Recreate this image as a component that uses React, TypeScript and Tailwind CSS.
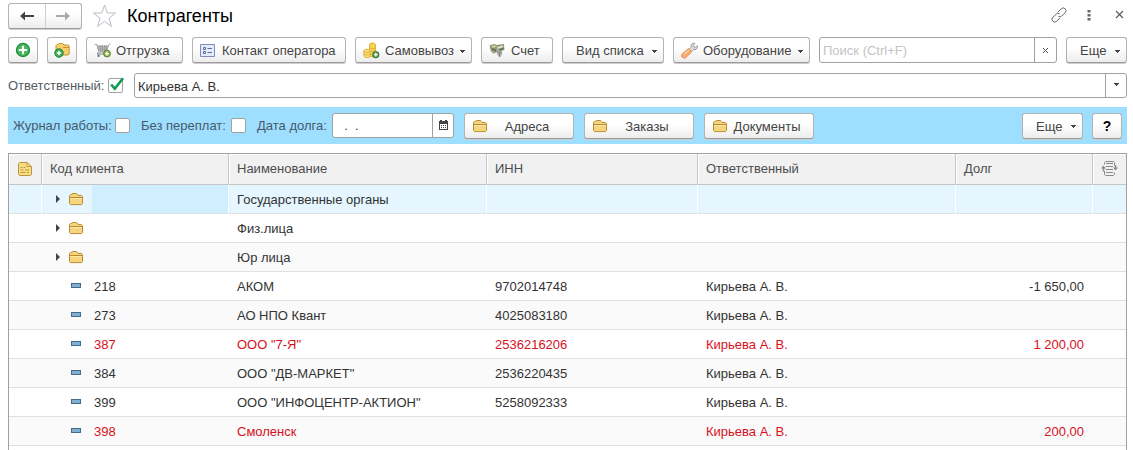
import { useState, type ReactNode } from "react";

type Row = {
  kind: "group" | "item";
  code?: string;
  name: string;
  inn?: string;
  manager?: string;
  debt?: string;
  overdue?: boolean;
};

const rows: Row[] = [
  { kind: "group", name: "Государственные органы" },
  { kind: "group", name: "Физ.лица" },
  { kind: "group", name: "Юр лица" },
  { kind: "item", code: "218", name: "АКОМ", inn: "9702014748", manager: "Кирьева А. В.", debt: "-1 650,00" },
  { kind: "item", code: "273", name: "АО НПО Квант", inn: "4025083180", manager: "Кирьева А. В." },
  { kind: "item", code: "387", name: 'ООО "7-Я"', inn: "2536216206", manager: "Кирьева А. В.", debt: "1 200,00", overdue: true },
  { kind: "item", code: "384", name: 'ООО "ДВ-МАРКЕТ"', inn: "2536220435", manager: "Кирьева А. В." },
  { kind: "item", code: "399", name: 'ООО "ИНФОЦЕНТР-АКТИОН"', inn: "5258092333", manager: "Кирьева А. В." },
  { kind: "item", code: "398", name: "Смоленск", manager: "Кирьева А. В.", debt: "200,00", overdue: true },
];

const buttonLook =
  "flex h-[26px] shrink-0 items-center rounded-[3px] border border-[#b3b3b3] border-b-[#9a9a9a] bg-linear-to-b from-white from-40% to-[#ededed] shadow-[0_1px_0_#cfcfcf] text-[#444444]";

function Caret({ className = "" }: { className?: string }) {
  return (
    <svg viewBox="0 0 5 3" className={`h-[3px] w-[5px] shrink-0 ${className}`} shapeRendering="crispEdges">
      <path d="M0 0h5v1H4v1H3v1H2V2H1V1H0z" fill="#444" />
    </svg>
  );
}

function FolderIcon() {
  return (
    <svg viewBox="0 0 16 14" className="h-[14px] w-4 shrink-0">
      <path d="M1.5 11.5v-8l1.2-1.2h1L5 1.5h3.5L10 3.4h3.3l1.2 1.2v7l-1 1h-11z" fill="#f6d67c" stroke="#b98a35" strokeLinejoin="round" />
      <path d="M2 5.5h12" stroke="#b98a35" />
      <path d="M2.2 6.5h11.6" stroke="#fde9a8" />
    </svg>
  );
}

function PlusBadge({ cx, cy, r }: { cx: number; cy: number; r: number }) {
  const a = r * 0.55;
  return (
    <g>
      <circle cx={cx} cy={cy} r={r} fill="#3bab50" stroke="#21803a" />
      <path d={`M${cx - a} ${cy}h${a * 2}M${cx} ${cy - a}v${a * 2}`} stroke="#fff" strokeWidth={1.5} />
    </g>
  );
}

function AddIcon() {
  return (
    <svg viewBox="0 0 16 16" className="size-4">
      <circle cx="8" cy="8" r="6.6" fill="#43b65a" stroke="#258b40" strokeWidth="1.2" />
      <path d="M3.8 8h8.4M8 3.8v8.4" stroke="#fff" strokeWidth="2.2" />
    </svg>
  );
}

function AddGroupIcon() {
  return (
    <svg viewBox="0 0 16 16" className="size-4">
      <path d="M2 12V3.5l1-1h1L5 1.5h3.5L10 3h4.2l1 1v8l-1 1H3z" fill="#f6cf6d" stroke="#c39138" />
      <path d="M9 5.5h6" stroke="#c39138" />
      <PlusBadge cx={5} cy={11} r={4.2} />
    </svg>
  );
}

function CartIcon() {
  return (
    <svg viewBox="0 0 18 16" className="h-4 w-[18px] shrink-0" fill="none">
      <path d="M2.2 3.5 14 4.3l-1.8 5.2H4.6z" fill="#d6d6d6" />
      <path d="M.7 2.5H3l2 7.5h7.4l2.3-7.4 1.8-.8M3 4.2h11M3.6 6h10M4 7.9h9M6 3l.8 7M8.3 3v7M10.6 3l-.5 7M12.8 3l-1.2 7" stroke="#8f8f8f" strokeWidth=".8" />
      <path d="M4.5 10 3.2 12h9" stroke="#808080" />
      <circle cx="4.6" cy="13.8" r="1.2" fill="#777" />
      <circle cx="13" cy="11.6" r="3.4" fill="#8bb343" stroke="#58822b" />
      <path d="M11 11.6h4M13 9.6v4" stroke="#fff" strokeWidth="1.4" />
    </svg>
  );
}

function CardIcon() {
  return (
    <svg viewBox="0 0 15 13" className="h-[13px] w-[15px] shrink-0" fill="none">
      <path d="M.5.5h14v12H.5z" fill="#e6ebfb" stroke="#7c8dbd" />
      <path d="M3.5 3.5h2v2h-2zM3.5 7.5h2v2h-2z" stroke="#5f6d9a" />
      <path d="M7.5 4.5h4.5M7.5 8.5h4.5" stroke="#5f6d9a" />
    </svg>
  );
}

function CoinsIcon() {
  return (
    <svg viewBox="0 0 17 17" className="size-[17px] shrink-0">
      <path d="M6.5 2.8c0-1 1.2-1.7 3-1.7s3 .7 3 1.7v10.4c0 1-1.2 1.7-3 1.7s-3-.7-3-1.7z" fill="#f8d34c" stroke="#d7a32a" strokeWidth=".8" />
      <path d="M6.6 5.6c.8 1.4 5 1.4 5.8 0M6.6 8.4c.8 1.4 5 1.4 5.8 0" stroke="#d7a32a" strokeWidth=".8" fill="none" />
      <path d="M.8 9c0-1 1.2-1.7 3.2-1.7S7.2 8 7.2 9v4.8c0 1-1.2 1.7-3.2 1.7s-3.2-.7-3.2-1.7z" fill="#fae07a" stroke="#d7a32a" strokeWidth=".8" />
      <path d="M1 9.4c1 1.4 5.2 1.4 6.1 0M1 12c1 1.4 5.2 1.4 6.1 0" stroke="#d7a32a" strokeWidth=".8" fill="none" />
      <circle cx="12.8" cy="12.7" r="3.2" fill="#5b9a50" stroke="#2f6f38" strokeWidth=".9" />
      <path d="M10.9 12.7h3.8M12.8 10.8v3.8" stroke="#fff" strokeWidth="1.3" />
    </svg>
  );
}

function BillIcon() {
  return (
    <svg viewBox="0 0 16 16" className="size-4 shrink-0">
      <path d="M.5 3.5 5 2l3 1 7-1 .4 6-5.4 1.5-4 1.5-4-1.5z" fill="#87946c" />
      <path d="M1.500 4.200 5 3.200l3.500 1L4.500 6z" fill="#c8cda9" />
      <path d="m8 5 5.500-1.800 1 1.800L9 7z" fill="#dfe2cc" />
      <path d="m3 7 4 1.500M9.500 8l5-1.500" stroke="#56614a" />
      <path d="M7.500 6h2l.5 3 3-.5-.5 5.500-2 1.500-2.500-3z" fill="#b0b0b0" />
      <path d="m8.500 9.500 2 1v4M12 9v3" stroke="#777" strokeWidth=".8" fill="none" />
      <path d="M2 8.500 6 10l-1 2-2-1z" fill="#b9b18e" />
    </svg>
  );
}

function WrenchIcon() {
  return (
    <svg viewBox="0 0 17 17" className="size-[17px] shrink-0">
      <path d="m8 7.500 2-2c-.5-2.300.8-4.200 3-4.500l.8.500-1.500 2 .7 1.500 1.500.3 1.600-1.600.5.800c0 2.200-2 3.700-4 3.100l-2 2z" fill="#dcdcdc" stroke="#858585" strokeWidth=".8" />
      <path d="m7.500 6.500 3.300 3.300-5.600 5.500c-1.200 1.100-2.900 1-3.900 0s-1-2.500.1-3.600z" fill="#f9a96b" stroke="#e08a4c" strokeWidth=".9" />
      <path d="m3 12.500 5-4.500" stroke="#fdd0a8" strokeWidth="1.200" />
    </svg>
  );
}

function DocumentIcon() {
  return (
    <svg viewBox="0 0 14 14" className="h-[14px] w-[14px]">
      <path d="M.5 1.500l1-1h7.500l4.500 4v8l-1 1h-11l-1-1z" fill="#f8dc84" stroke="#bd9440" />
      <path d="M9 .8v3.700h4.200M2.500 5.500h2M5.500 5.500h2M2.500 8h3M7 8h4M2.500 10.500h5M9 10.500h2" stroke="#bd9440" fill="none" strokeWidth=".9" />
    </svg>
  );
}

function ListSettingsIcon() {
  return (
    <svg viewBox="0 0 17 15" className="h-[15px] w-[17px]" fill="none" stroke="#8a8a8a">
      <path d="M3.500 3.500v-2l1-1h8l1 1v3M3.500 10v3.500l1 1h8l1-1v-2" />
      <path d="M5 2.500h7M5 5.500h7M5 8.500h7M5 11.500h7" />
      <path d="M2.500 6v4.500M14.500 4v4" strokeWidth="1.500" />
      <path d="M0 7.500 2.500 4.500 5 7.500zM12 6.500h5L14.500 9.500z" fill="#8a8a8a" stroke="none" />
    </svg>
  );
}

function ToolButton({ icon, label, menu, width }: { icon?: ReactNode; label: string; menu?: boolean; width: string }) {
  return (
    <button type="button" className={`${buttonLook} ${width} ${icon ? "pl-[7px]" : "pl-[13px]"}`}>
      {icon && <span className="flex w-[22px] shrink-0">{icon}</span>}
      <span className="pt-0.5 whitespace-nowrap">{label}</span>
      {menu && <Caret className="mt-0.5 mr-[6px] ml-auto" />}
    </button>
  );
}

function FolderButton({ label }: { label: string }) {
  return (
    <button type="button" className={`${buttonLook} w-[110px] px-[7px]`}>
      <FolderIcon />
      <span className="flex-1 pt-0.5 text-center">{label}</span>
    </button>
  );
}

function Check({ id, checked = false }: { id: string; checked?: boolean }) {
  const [on, setOn] = useState(checked);
  return (
    <span className="relative flex size-[15px] shrink-0">
      <input
        id={id}
        type="checkbox"
        checked={on}
        onChange={() => setOn(!on)}
        className="size-[15px] appearance-none rounded-[2px] border border-[#a0a0a0] bg-white"
      />
      {on && (
        <svg viewBox="0 0 15 15" className="pointer-events-none absolute inset-0 size-[15px] overflow-visible" fill="none">
          <path d="M3.200 6.500 6.800 10.800 15 .3" stroke="#11994f" strokeWidth="2.600" />
        </svg>
      )}
    </span>
  );
}

const headCell = "border-l border-[#c6c6c6] pl-2 text-left font-normal text-[#4d4d4d] shadow-[inset_1px_1px_0_#fff]";

export default function App() {
  const [selected, setSelected] = useState(0);
  return (
    <div className="flex h-screen flex-col overflow-hidden bg-white pr-1.5 pl-2 font-['Liberation_Sans',Arial,sans-serif] text-[13px] leading-4 text-[#444444]">
      <header className="flex h-[30px] shrink-0 items-center pt-px">
        <div className={`${buttonLook} h-6 w-[74px] overflow-hidden`}>
          <button type="button" aria-label="Назад" className="flex h-full flex-1 items-center justify-center border-r border-[#d0d0d0]">
            <svg viewBox="0 0 14 10" className="h-[10px] w-[14px]">
              <path d="M0 5l5-4.500v3.400h9v2.200H5v3.400z" fill="#444" />
            </svg>
          </button>
          <button type="button" aria-label="Вперед" className="flex h-full flex-1 items-center justify-center">
            <svg viewBox="0 0 14 10" className="h-[10px] w-[14px]">
              <path d="M14 5 9 .5v3.500H0v2h9v3.500z" fill="#aaa" />
            </svg>
          </button>
        </div>
        <button type="button" aria-label="Добавить в избранное" className="ml-[10px]">
          <svg viewBox="0 0 24 24" className="size-6" fill="none">
            <path d="m12.500 1 2.700 8H23.500l-6.500 5.200 2.400 8.300-6.900-5.200-6.900 5.200L8 14.200 1.500 9H9.800z" stroke="#b9bdc5" />
          </svg>
        </button>
        <h1 className="ml-[11px] text-[18px] leading-6 text-black">Контрагенты</h1>
        <div className="ml-auto flex items-center pb-0.5 text-[#555]">
          <button type="button" aria-label="Получить ссылку">
            <svg viewBox="0 0 16 16" className="size-4" fill="none" stroke="#666" strokeLinecap="round">
              <path d="m7.300 4.800 3-3a2.600 2.600 0 0 1 3.900 3.800l-3.500 3.500a2.500 2.500 0 0 1-3 .4M8.700 11.200l-3 3a2.600 2.600 0 0 1-3.900-3.800l3.500-3.500a2.500 2.500 0 0 1 3-.4" />
            </svg>
          </button>
          <button type="button" aria-label="Меню окна" className="ml-5">
            <svg viewBox="0 0 4 12" className="h-3 w-1" fill="#666">
              <path d="M.5 1h3v2.500h-3zM.5 5h3v2.500h-3zM.5 9h3v2.500h-3z" />
            </svg>
          </button>
          <button type="button" aria-label="Закрыть" className="mr-[3px] ml-6">
            <svg viewBox="0 0 9 9" className="size-[9px]" stroke="#555" strokeWidth="1.100">
              <path d="m1 1 7 7M8 1 1 8" />
            </svg>
          </button>
        </div>
      </header>

      <div className="mt-[7px] flex shrink-0 gap-[9px]">
        <button type="button" aria-label="Создать" className={`${buttonLook} w-[30px] justify-center`}>
          <AddIcon />
        </button>
        <button type="button" aria-label="Создать группу" className={`${buttonLook} w-[30px] justify-center`}>
          <AddGroupIcon />
        </button>
        <ToolButton icon={<CartIcon />} label="Отгрузка" width="w-[97px]" />
        <ToolButton icon={<CardIcon />} label="Контакт оператора" width="w-[154px]" />
        <ToolButton icon={<CoinsIcon />} label="Самовывоз" menu width="w-[117px]" />
        <ToolButton icon={<BillIcon />} label="Счет" width="w-[72px]" />
        <ToolButton label="Вид списка" menu width="w-[102px]" />
        <ToolButton icon={<WrenchIcon />} label="Оборудование" menu width="w-[137px]" />
        <div className="flex h-[26px] min-w-[120px] flex-1 rounded-[3px] border border-[#a0a0a0]">
          <input
            type="text"
            aria-label="Поиск"
            placeholder="Поиск (Ctrl+F)"
            className="min-w-0 flex-1 bg-transparent pt-0.5 pl-[3px] outline-none placeholder:text-[#c4c4c4]"
          />
          <button type="button" aria-label="Очистить" className="flex w-[22px] items-center justify-center border-l border-[#a0a0a0]">
            <svg viewBox="0 0 7 7" className="size-[7px]" stroke="#555">
              <path d="m1 1 5 5M6 1 1 6" />
            </svg>
          </button>
        </div>
        <ToolButton label="Еще" menu width="w-[61px]" />
      </div>

      <div className="mt-[10px] flex shrink-0 items-center">
        <label htmlFor="manager-on" className="w-[100px] shrink-0 whitespace-nowrap text-[#555c66]">
          Ответственный:
        </label>
        <Check id="manager-on" checked />
        <div className="relative ml-[11px] flex h-[25px] flex-1 rounded-[3px] border border-[#a0a0a0]">
          <select aria-label="Ответственный" className="h-full w-full appearance-none bg-transparent pt-0.5 pl-[3px] text-[#333] outline-none">
            <option>Кирьева А. В.</option>
          </select>
          <span className="pointer-events-none absolute inset-y-0 right-0 flex w-[21px] items-center justify-center border-l border-[#a0a0a0] pb-0.5">
            <Caret />
          </span>
        </div>
      </div>

      <div className="mt-[9px] flex h-[37px] shrink-0 items-center bg-[#9edfff] pr-[5px] pl-[5px] text-[#46596a]">
        <label htmlFor="journal" className="w-[102px] whitespace-nowrap">Журнал работы:</label>
        <Check id="journal" />
        <label htmlFor="no-overpay" className="ml-[11px] w-[90px] whitespace-nowrap">Без переплат:</label>
        <Check id="no-overpay" />
        <label htmlFor="debt-date" className="ml-[11px] w-[75px] whitespace-nowrap">Дата долга:</label>
        <div className="flex h-[25px] w-[122px] rounded-[3px] border border-[#a0a0a0] bg-white">
          <input id="debt-date" type="text" defaultValue="  .  ." className="min-w-0 flex-1 bg-transparent pl-1 text-[#444] outline-none" />
          <button type="button" aria-label="Выбрать дату" className="flex w-[21px] items-center justify-center border-l border-[#a0a0a0] pb-0.5">
            <svg viewBox="0 0 9 10" className="h-[10px] w-[9px]" shapeRendering="crispEdges">
              <path d="M0 1h1V0h2v1h3V0h2v1h1v9H0z" fill="#444" />
              <path d="M1 4h7v5H1z" fill="#fff" />
              <path d="M2 5h1v1H2zM4 5h1v1H4zM6 5h1v1H6zM2 7h1v1H2zM4 7h1v1H4zM6 7h1v1H6z" fill="#444" />
            </svg>
          </button>
        </div>
        <div className="ml-[10px] flex gap-[10px]">
          <FolderButton label="Адреса" />
          <FolderButton label="Заказы" />
          <FolderButton label="Документы" />
        </div>
        <div className="ml-auto flex gap-[9px]">
          <ToolButton label="Еще" menu width="w-[61px]" />
          <button type="button" aria-label="Справка" className={`${buttonLook} w-[30px] justify-center`}>
            <span className="text-[14px] font-bold text-black">?</span>
          </button>
        </div>
      </div>

      <div className="mt-[9px] min-h-0 flex-1 overflow-hidden border-x border-t border-[#a0a0a0]">
        <table className="w-full table-fixed border-separate border-spacing-0">
          <colgroup>
            <col className="w-8" />
            <col className="w-[187px]" />
            <col className="w-[258px]" />
            <col className="w-[211px]" />
            <col className="w-[258px]" />
            <col className="w-[137px]" />
            <col className="w-[34px]" />
          </colgroup>
          <thead>
            <tr className="h-[31px] bg-[#f1f1f1] [&>th]:border-b [&>th]:border-b-[#c6c6c6]">
              <th scope="col" aria-label="Тип" className="shadow-[inset_1px_1px_0_#fff]">
                <span className="flex justify-center"><DocumentIcon /></span>
              </th>
              <th scope="col" className={headCell}>Код клиента</th>
              <th scope="col" className={headCell}>Наименование</th>
              <th scope="col" className={headCell}>ИНН</th>
              <th scope="col" className={headCell}>Ответственный</th>
              <th scope="col" className={headCell}>Долг</th>
              <th scope="col" aria-label="Настройка списка" className="border-l border-[#c6c6c6] shadow-[inset_1px_1px_0_#fff]">
                <span className="flex justify-center pb-0.5"><ListSettingsIcon /></span>
              </th>
            </tr>
          </thead>
          <tbody>
            {rows.map((row, i) => {
              const active = i === selected;
              const tone = active
                ? "bg-[#e5f6ff] [&>td+td]:border-l-white"
                : i % 2
                  ? "bg-white [&>td+td]:border-l-transparent"
                  : "bg-[#fafafa] [&>td+td]:border-l-transparent";
              return (
                <tr
                  key={row.name}
                  onClick={() => setSelected(i)}
                  className={`h-[29px] [&>td]:border-b [&>td]:border-b-[#e0e0e0] [&>td]:p-0 [&>td+td]:border-l ${tone} ${row.overdue ? "text-[#d8101c]" : "text-[#333333]"}`}
                >
                  <td />
                  <td>
                    <div className="flex h-7 items-center">
                      <span className="flex w-[50px] shrink-0 items-center pl-[14px]">
                        {row.kind === "group" ? (
                          <>
                            <svg viewBox="0 0 4 8" className="mr-2 h-2 w-1">
                              <path d="M0 0l4 4-4 4z" fill="#444" />
                            </svg>
                            <FolderIcon />
                          </>
                        ) : (
                          <svg viewBox="0 0 10 5" className="mb-0.5 ml-[15px] h-[5px] w-[10px]" shapeRendering="crispEdges">
                            <path d="M.5.500h9v4h-9z" fill="#7fb0d3" stroke="#436b8c" />
                          </svg>
                        )}
                      </span>
                      <span className={`flex h-full flex-1 items-center pt-0.5 pl-0.5 ${active ? "bg-[#cfefff]" : ""}`}>{row.code}</span>
                    </div>
                  </td>
                  <td><div className="pt-0.5 pl-2">{row.name}</div></td>
                  <td><div className="pt-0.5 pl-2">{row.inn}</div></td>
                  <td><div className="pt-0.5 pl-2">{row.manager}</div></td>
                  <td><div className="pt-0.5 pr-2 text-right">{row.debt}</div></td>
                  <td />
                </tr>
              );
            })}
          </tbody>
        </table>
      </div>
    </div>
  );
}
